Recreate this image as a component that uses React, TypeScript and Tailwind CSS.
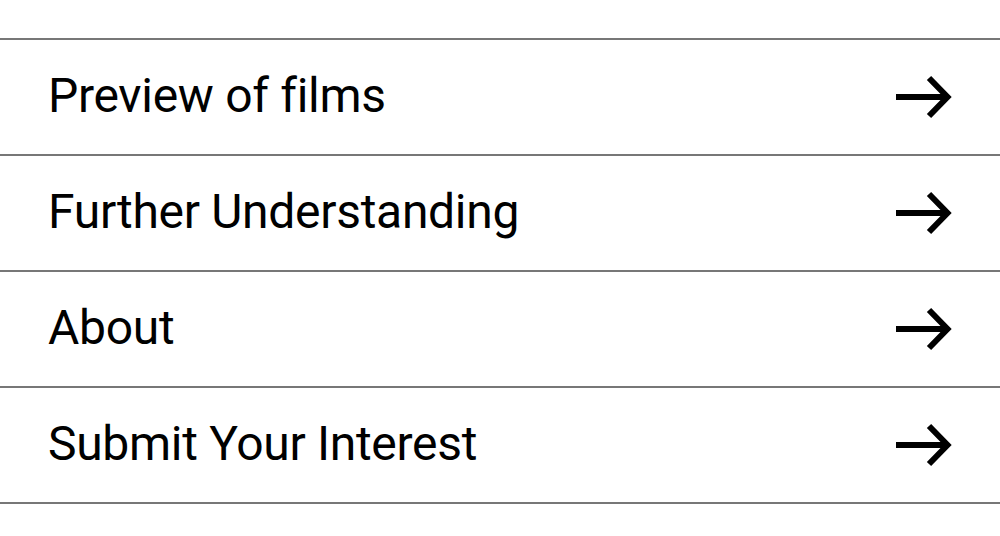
import React from "react";

const items = ["Preview of films", "Further Understanding", "About", "Submit Your Interest"];

function Arrow() {
  return (
    <svg width="58" height="44" viewBox="0 0 58 44" fill="none" className="block">
      <path d="M1 22 H52" stroke="#000" strokeWidth="6" />
      <path d="M34 3 L52.5 22 L34 41" stroke="#000" strokeWidth="6" strokeLinejoin="miter" />
    </svg>
  );
}

export default function App() {
  return (
    <div className="w-[1000px] h-[536px] bg-white pt-[38px]" style={{ fontFamily: "Roboto, 'Liberation Sans', sans-serif" }}>
      <div className="border-b-2 border-[#777]">
        {items.map((t) => (
          <div key={t} className="h-[116px] border-t-2 border-[#777] flex items-center justify-between pl-[48px] pr-[47px]">
            <span className="text-[48px] leading-none text-black tracking-[-0.3px] [font-variant-ligatures:none] -mt-[3px]">{t}</span>
            <Arrow />
          </div>
        ))}
      </div>
    </div>
  );
}
